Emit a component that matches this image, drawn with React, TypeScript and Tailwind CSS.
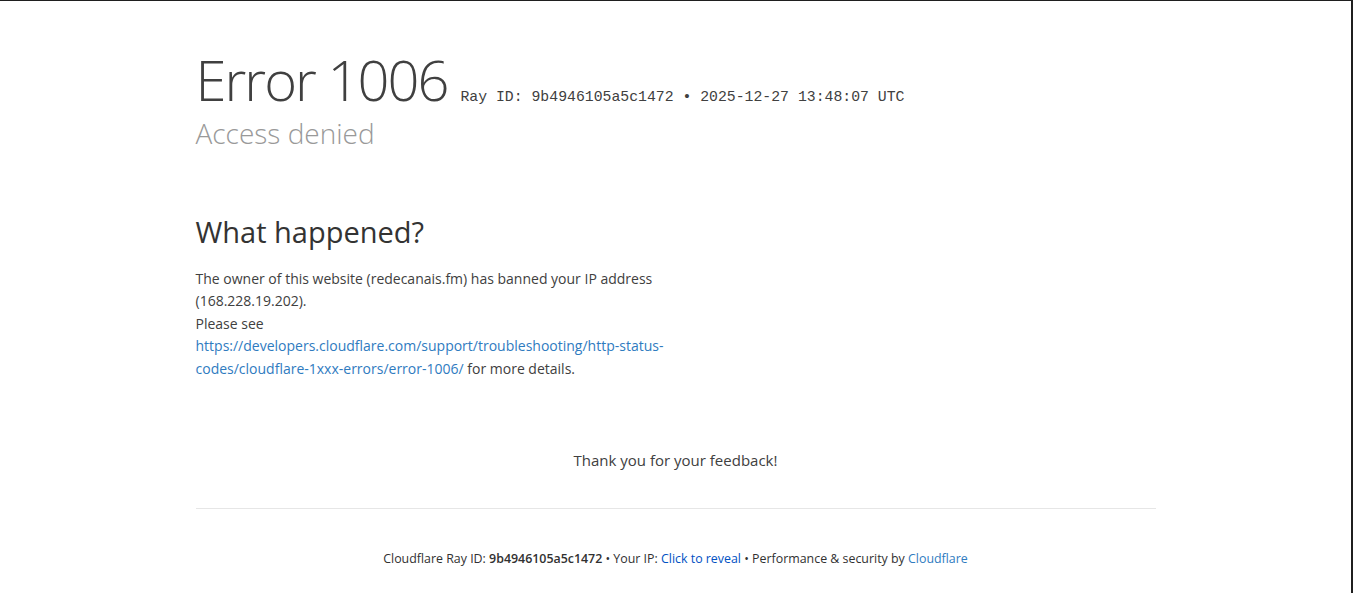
export default function App() {
  return (
    <div
      className="min-h-[593px] border-t border-r-2 border-[#1f1f1f] bg-white text-[#404040]"
      style={{ fontFamily: '"Open Sans", "Noto Sans", sans-serif' }}
    >
      <div className="mx-auto w-[960px] pt-[48px]">
        <header>
          <h1 className="flex items-baseline">
            <span className="text-[56px] font-light leading-[61px] tracking-[-0.035em]">Error 1006</span>
            <span className="ml-[13px] font-['Liberation_Mono',monospace] text-[14.8px] text-[#404040]">
              Ray ID: 9b4946105a5c1472 &bull; 2025-12-27 13:48:07 UTC
            </span>
          </h1>
          <h2 className="mt-[6px] text-[28px] font-light leading-[34px] text-[#999]">Access denied</h2>
        </header>

        <section className="mt-[65px] w-[490px]">
          <h2 className="text-[29px] leading-[1.2] text-[#333]">What happened?</h2>
          <p className="mt-[18px] text-[14px] leading-[22.5px]">
            The owner of this website (redecanais.fm) has banned your IP address (168.228.19.202).
            <br />
            Please see{" "}
            <a href="#" className="text-[#2f7bbf]">
              https://developers.cloudflare.com/support/troubleshooting/http-status-codes/cloudflare-1xxx-errors/error-1006/
            </a>{" "}
            for more details.
          </p>
        </section>

        <p className="mt-[69px] text-center text-[15px]">Thank you for your feedback!</p>

        <div className="mt-[36px] border-t border-[#e6e6e6]" />

        <footer className="mt-[41px] text-center text-[12.4px] text-[#313131]">
          Cloudflare Ray ID: <strong className="font-semibold">9b4946105a5c1472</strong> &bull; Your IP:{" "}
          <a href="#" className="text-[#0051c3]">
            Click to reveal
          </a>{" "}
          &bull; Performance &amp; security by{" "}
          <a href="#" className="text-[#2f7bbf]">
            Cloudflare
          </a>
        </footer>
      </div>
    </div>
  );
}
